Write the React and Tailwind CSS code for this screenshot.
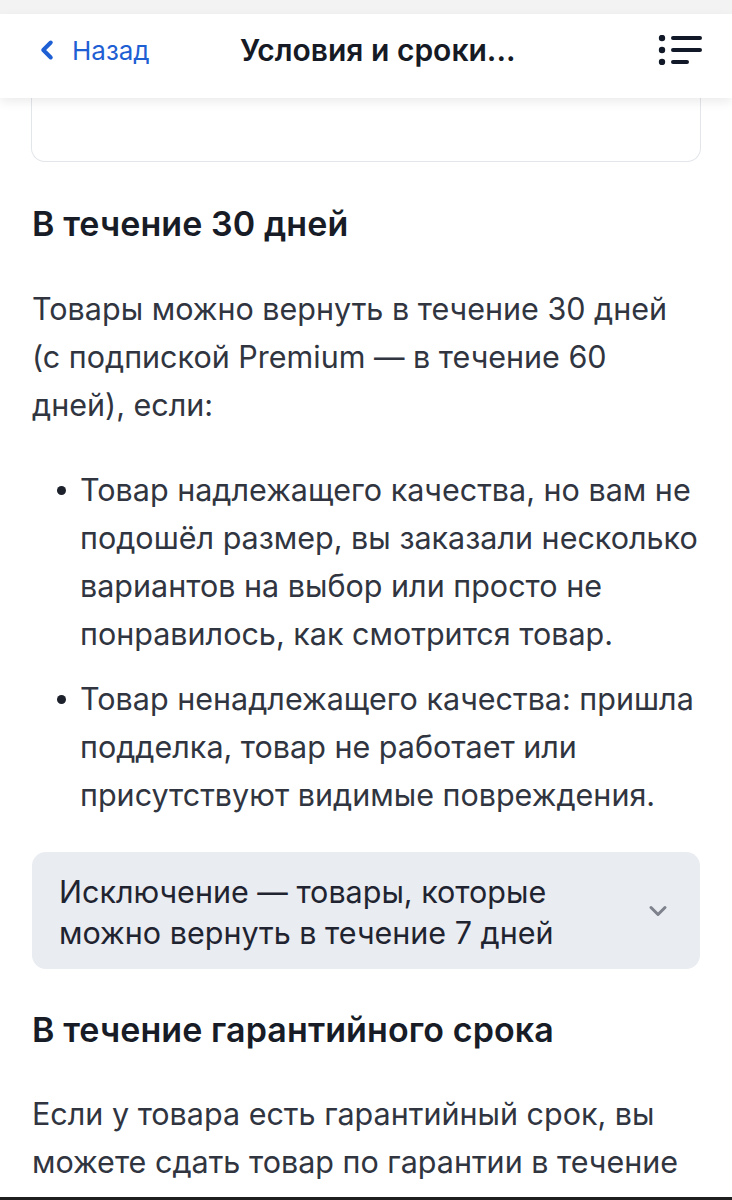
import { ChevronLeft, ChevronDown } from 'lucide-react'

function MenuIcon() {
  return (
    <svg width="44" height="30" viewBox="0 0 44 30" fill="none">
      <circle cx="4" cy="3" r="3.2" fill="#111827" />
      <circle cx="4" cy="15" r="3.2" fill="#111827" />
      <circle cx="4" cy="27" r="3.2" fill="#111827" />
      <path d="M15 3h27M15 15h27M15 27h14" stroke="#111827" strokeWidth="4" strokeLinecap="round" />
    </svg>
  )
}

function Bullet() {
  return (
    <span className="w-[48px] shrink-0 flex pl-[25px] pt-[20px]">
      <span className="w-[9px] h-[9px] rounded-full bg-[#1c212b]" />
    </span>
  )
}

function App() {
  return (
    <div className="min-h-[1200px] bg-white font-['Inter',sans-serif] text-[#1c212b] flex flex-col">
      <div className="h-[14px] bg-[#f3f3f4]" />
      <header className="h-[84px] bg-white flex items-center pl-[32px] pr-[30px] pb-[12px] shadow-[0_4px_10px_rgba(0,0,0,0.08)] relative z-10">
        <button className="flex items-center gap-[10px] text-[#1f5fd4] w-[208px]">
          <ChevronLeft size={30} strokeWidth={3.2} />
          <span className="text-[26px]">Назад</span>
        </button>
        <h1 className="flex-1 text-[30px] font-semibold text-[#151a24]">Условия и сроки...</h1>
        <MenuIcon />
      </header>

      <div className="mx-[31px] h-[64px] border border-t-0 border-[#e2e5ea] rounded-b-[14px]" />

      <main className="px-[32px] pt-[44px] flex-1">
        <h2 className="text-[34px] leading-[36px] font-semibold tracking-[0.1px] text-[#171c26]">В течение 30 дней</h2>

        <p className="mt-[43px] text-[30.5px] leading-[48px] text-[#30353f]">
          Товары можно вернуть в течение 30 дней (с подпиской Premium — в течение 60 дней), если:
        </p>

        <ul className="mt-[37px] flex flex-col gap-[17px] text-[30.5px] leading-[48px] text-[#30353f]">
          <li className="flex">
            <Bullet />
            <span>Товар надлежащего качества, но вам не подошёл размер, вы заказали несколько вариантов на выбор или просто не понравилось, как смотрится товар.</span>
          </li>
          <li className="flex">
            <Bullet />
            <span>Товар ненадлежащего качества: пришла подделка, товар не работает или присутствуют видимые повреждения.</span>
          </li>
        </ul>

        <div className="mt-[33px] h-[117px] rounded-[14px] bg-[#e9ecf0] flex items-center pl-[27px] pr-[28px]">
          <span className="flex-1 pr-[40px] pt-[2px] text-[30.5px] leading-[41px] text-[#1f2430]">
            Исключение — товары, которые можно вернуть в течение 7 дней
          </span>
          <ChevronDown size={28} strokeWidth={2.6} className="text-[#7d828c]" />
        </div>

        <h2 className="mt-[43px] text-[34px] leading-[36px] font-semibold tracking-[0.1px] text-[#171c26]">В течение гарантийного срока</h2>

        <p className="mt-[42px] text-[30.5px] leading-[48px] text-[#30353f]">
          Если у товара есть гарантийный срок, вы можете сдать товар по гарантии в течение
        </p>
      </main>
      <div className="h-[3px] bg-[#1f1f1f]" />
    </div>
  )
}

export default App
